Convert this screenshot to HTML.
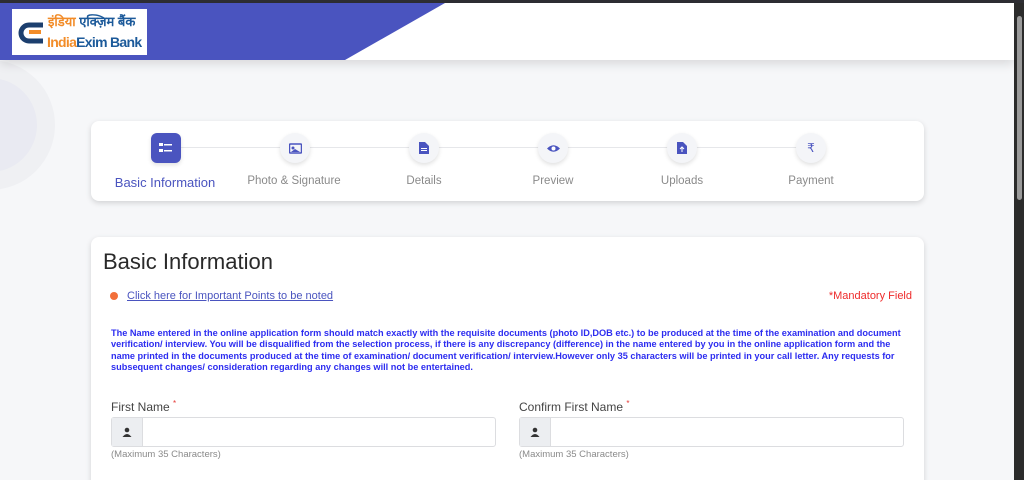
<!DOCTYPE html>
<html><head><meta charset="utf-8"><style>
*{box-sizing:border-box;margin:0;padding:0}
html,body{width:1024px;height:480px;overflow:hidden}
body{background:#f6f7f9;font-family:"Liberation Sans",sans-serif;position:relative}
.topbar{position:absolute;left:0;top:0;width:1024px;height:3px;background:#2e2e33}
.header{position:absolute;left:0;top:3px;width:1014px;height:57px;background:#fff;box-shadow:0 4px 10px rgba(0,0,0,.12);overflow:hidden}
.purple{position:absolute;left:0;top:0;width:100%;height:57px;background:#4a54bf;clip-path:polygon(0 0,445px 0,345px 57px,0 57px)}
.logo{position:absolute;left:12px;top:6px;width:135px;height:46px;background:#fff;overflow:hidden;white-space:nowrap}
.sb{position:absolute;left:1014px;top:3px;width:10px;height:477px;background:#2b2b2b}
.thumb{position:absolute;left:1017px;top:16px;width:5px;height:184px;background:#9a9a9a;border-radius:3px}
.deco{position:absolute;left:-75px;top:60px;width:130px;height:130px;border-radius:50%;border:18px solid #eff0f3;background:#e9eaf2}
.card{position:absolute;left:91px;width:833px;background:#fff;border-radius:8px;box-shadow:0 2px 6px rgba(0,0,0,.15)}
.line{position:absolute;left:165px;top:147px;width:646px;height:1px;background:#e6e7ea}
.step{position:absolute;top:133px;width:30px;height:30px;border-radius:50%;background:#f4f5f8;box-shadow:0 2px 4px rgba(0,0,0,.12);display:flex;align-items:center;justify-content:center;color:#4a54bf;font-size:11px}
.lbl{position:absolute;top:175px;width:130px;text-align:center;font-size:11.5px;color:#8a8a8a}
.in{position:absolute;top:417px;height:30px;border:1px solid #dcdde0;border-radius:3px;background:#fff}
.in .ad{width:31px;height:28px;background:#eceef1;border-right:1px solid #dcdde0;display:flex;align-items:center;justify-content:center}
.fl{position:absolute;top:399px;font-size:12px;color:#444}
.fl sup{color:#e53935;font-size:8px}
.hint{position:absolute;top:449px;font-size:9.5px;color:#8a8a8a}
</style></head><body>
<div class="topbar"></div>
<div class="deco"></div>
<div class="header"><div class="purple"></div>
<div class="logo">
<svg width="30" height="30" viewBox="0 0 30 30" style="position:absolute;left:4px;top:8px"><path d="M27 8 H13 a8 8 0 0 0 0 16 H27" fill="none" stroke="#1c3f6e" stroke-width="5"/><path d="M13 15 H25" stroke="#f28c28" stroke-width="4"/></svg>
<div style="position:absolute;left:36px;top:3px;font-size:13px;font-weight:bold;color:#f28c28;font-family:'Liberation Sans','Noto Sans CJK SC',sans-serif">इंडिया <span style="color:#1c5a9a">एक्ज़िम बैंक</span></div>
<div style="position:absolute;left:35px;top:25px;font-size:14px;font-weight:bold;letter-spacing:-.7px;color:#f28c28">India<span style="color:#1c5a9a">Exim Bank</span></div>
</div></div>
<div class="sb"></div><div class="thumb"></div>

<div class="card" style="top:121px;height:80px"></div>
<div class="line"></div>
<div class="step" style="left:151px;border-radius:6px;background:#4a54bf;color:#fff">
<svg width="14" height="12" viewBox="0 0 14 12"><rect x="0" y="1" width="4" height="3" fill="#fff"/><rect x="5" y="2" width="8" height="1.5" fill="#fff"/><rect x="0" y="7" width="4" height="3" fill="#fff"/><rect x="5" y="8" width="8" height="1.5" fill="#fff"/></svg></div>
<div class="step" style="left:280px"><svg width="13" height="11" viewBox="0 0 13 11"><rect x="0.5" y="1" width="12" height="9" rx="1" fill="none" stroke="#4a54bf" stroke-width="1.5"/><circle cx="4" cy="5" r="1.5" fill="#4a54bf"/><path d="M2 9 L6 6 L11 9Z" fill="#4a54bf"/></svg></div>
<div class="step" style="left:409px"><svg width="10" height="12" viewBox="0 0 10 12"><path d="M0 0H6L10 4V12H0Z" fill="#4a54bf"/><rect x="2" y="6" width="6" height="1" fill="#fff"/><rect x="2" y="8" width="6" height="1" fill="#fff"/></svg></div>
<div class="step" style="left:538px"><svg width="13" height="9" viewBox="0 0 13 9"><path d="M0 4.5 Q6.5 -2 13 4.5 Q6.5 11 0 4.5Z" fill="#4a54bf"/><circle cx="6.5" cy="4.5" r="2" fill="#fff"/></svg></div>
<div class="step" style="left:667px"><svg width="10" height="12" viewBox="0 0 10 12"><path d="M0 0H6L10 4V12H0Z" fill="#4a54bf"/><path d="M5 5V10M3 7L5 5L7 7" stroke="#fff" stroke-width="1" fill="none"/></svg></div>
<div class="step" style="left:796px;font-size:12px">₹</div>
<div class="lbl" style="left:100px;color:#4a54bf;font-size:13px;top:175px">Basic Information</div>
<div class="lbl" style="left:229px">Photo &amp; Signature</div>
<div class="lbl" style="left:359px">Details</div>
<div class="lbl" style="left:488px">Preview</div>
<div class="lbl" style="left:617px">Uploads</div>
<div class="lbl" style="left:746px">Payment</div>

<div class="card" style="top:237px;height:260px"></div>
<div style="position:absolute;left:103px;top:249px;font-size:22px;color:#2a2a2a">Basic Information</div>
<div style="position:absolute;left:110px;top:292px;width:8px;height:8px;border-radius:50%;background:#f26f3a"></div>
<div style="position:absolute;left:127px;top:290px;font-size:11px;color:#4a54bf;text-decoration:underline">Click here for Important Points to be noted</div>
<div style="position:absolute;right:112px;top:290px;font-size:11px;color:#ee2b2b">*Mandatory Field</div>
<div style="position:absolute;left:111px;top:328px;width:800px;font-size:9.2px;line-height:11.3px;font-weight:bold;color:#2d2df0">The Name entered in the online application form should match exactly with the requisite documents (photo ID,DOB etc.) to be produced at the time of the examination and document verification/ interview. You will be disqualified from the selection process, if there is any discrepancy (difference) in the name entered by you in the online application form and the name printed in the documents produced at the time of examination/ document verification/ interview.However only 35 characters will be printed in your call letter. Any requests for subsequent changes/ consideration regarding any changes will not be entertained.</div>
<div class="fl" style="left:111px">First Name <sup>*</sup></div>
<div class="fl" style="left:519px">Confirm First Name <sup>*</sup></div>
<div class="in" style="left:111px;width:385px"><div class="ad"><svg width="10" height="10" viewBox="0 0 10 10"><circle cx="5" cy="3" r="2.3" fill="#333"/><path d="M0.5 10 Q5 4 9.5 10Z" fill="#333"/></svg></div></div>
<div class="in" style="left:519px;width:385px"><div class="ad"><svg width="10" height="10" viewBox="0 0 10 10"><circle cx="5" cy="3" r="2.3" fill="#333"/><path d="M0.5 10 Q5 4 9.5 10Z" fill="#333"/></svg></div></div>
<div class="hint" style="left:111px">(Maximum 35 Characters)</div>
<div class="hint" style="left:519px">(Maximum 35 Characters)</div>
</body></html>
